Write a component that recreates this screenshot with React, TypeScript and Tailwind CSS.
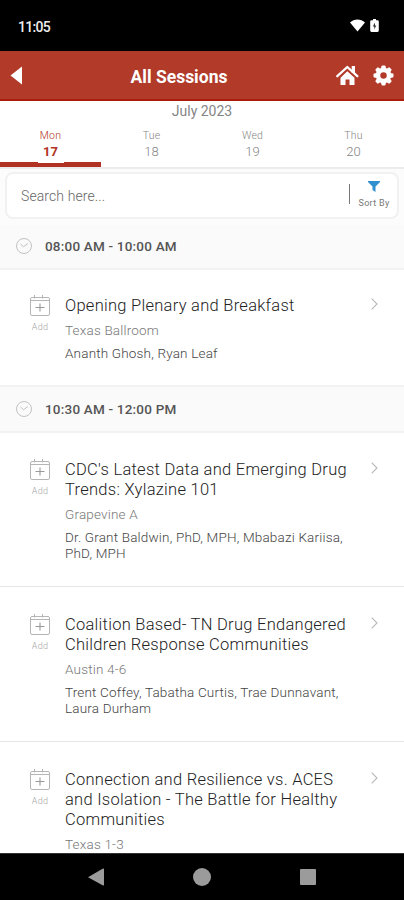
const days = [
  { name: "Mon", date: 17 },
  { name: "Tue", date: 18 },
  { name: "Wed", date: 19 },
  { name: "Thu", date: 20 },
];

const morningSessions = [
  {
    title: ["Opening Plenary and Breakfast"],
    room: "Texas Ballroom",
    speakers: ["Ananth Ghosh, Ryan Leaf"],
  },
];

const middaySessions = [
  {
    title: ["CDC's Latest Data and Emerging Drug", "Trends: Xylazine 101"],
    room: "Grapevine A",
    speakers: ["Dr. Grant Baldwin, PhD, MPH, Mbabazi Kariisa,", "PhD, MPH"],
  },
  {
    title: ["Coalition Based- TN Drug Endangered", "Children Response Communities"],
    room: "Austin 4-6",
    speakers: ["Trent Coffey, Tabatha Curtis, Trae Dunnavant,", "Laura Durham"],
  },
  {
    title: [
      "Connection and Resilience vs. ACES",
      "and Isolation - The Battle for Healthy",
      "Communities",
    ],
    room: "Texas 1-3",
    speakers: [],
  },
];

const gearTeeth = [0, 45, 90, 135, 180, 225, 270, 315];

type Session = { title: string[]; room: string; speakers: string[] };

const StatusBar = () => (
  <div className="h-[51px] shrink-0 bg-black flex items-center justify-between pl-[18px] pr-[25px]">
    <span className="text-[#eee] text-[14px] font-medium leading-5 tracking-[-0.700px] pt-[2px]">
      11:05
    </span>
    <div className="flex items-center gap-[5px]">
      <svg width="15" height="13" viewBox="0 0 15 13" fill="#fff">
        <path d="M0 3.6C4.2-.5 10.800-.5 15 3.600L7.500 12.500Z" />
      </svg>
      <svg width="9" height="13" viewBox="0 0 9 13">
        <path
          d="M3 0h3v1.300h1.500a1.300 1.300 0 0 1 1.300 1.300v9a1.300 1.300 0 0 1-1.300 1.300h-6a1.300 1.300 0 0 1-1.300-1.300v-9a1.300 1.300 0 0 1 1.300-1.300H3z"
          fill="#fff"
        />
        <path d="M5 3.500 2.800 7.600h1.500v3L6.300 6.500H5z" fill="#333" />
      </svg>
    </div>
  </div>
);

const Header = () => (
  <header className="h-[50px] shrink-0 bg-[#b13a29] border-b-2 border-[#a91c0d] flex items-center justify-between pl-[10px] pr-[10px]">
    <svg width="13" height="19" viewBox="0 0 13 19" fill="#fff">
      <path d="M12 0.500v18L0.500 9.500z" />
    </svg>
    <h1 className="text-white text-[17.500px] font-bold pt-[4px] pr-px">All Sessions</h1>
    <div className="flex items-center gap-[14px]">
      <svg width="23" height="21" viewBox="0 0 23 21">
        <path d="M15.700 1h3.300v7h-3.300z" fill="#fff" />
        <path d="M11.300 6.200 18.500 12.800V20h-5v-5.500h-4V20h-5v-7.200z" fill="#fff" />
        <path
          d="M1.300 11.200 11.300 2l10 9.200"
          fill="none"
          stroke="#fff"
          strokeWidth="2.300"
          strokeLinecap="round"
          strokeLinejoin="round"
        />
        <path d="M3.200 12.300 11.300 4.900l8.100 7.400" fill="none" stroke="#b13a29" strokeWidth="0.900" />
      </svg>
      <svg width="21" height="21" viewBox="0 0 21 21">
        {gearTeeth.map((angle) => (
          <path
            key={angle}
            d="M7.700 5 8.500 1.200Q8.700.5 9.400.5h2.200q.7 0 .9.700L13.300 5z"
            fill="#fff"
            transform={`rotate(${angle} 10.500 10.500)`}
          />
        ))}
        <circle cx="10.500" cy="10.500" r="5.500" fill="none" stroke="#fff" strokeWidth="4.500" />
      </svg>
    </div>
  </header>
);

const DayTabs = () => (
  <nav className="shrink-0 h-[68px] border-b-2 border-[#ececec] text-[#858585]">
    <p className="text-center text-[14px] leading-5">July 2023</p>
    <div className="grid grid-cols-4 h-[46px] text-center">
      {days.map((day, index) => (
        <div
          key={day.name}
          className={
            index === 0
              ? "flex flex-col items-center text-[#b13222]"
              : "flex flex-col items-center"
          }
        >
          <span className="text-[10.500px] leading-4 mt-[7px] tracking-[0.200px] font-light">
            {day.name}
          </span>
          <span
            className={
              index === 0
                ? "text-[13px] leading-4 font-bold"
                : "text-[13px] leading-4 font-light"
            }
          >
            {day.date}
          </span>
          {index === 0 && (
            <span className="mt-[2px] h-[5px] w-full bg-[#b13222] flex justify-center">
              <span className="h-px w-[26px] bg-white" />
            </span>
          )}
        </div>
      ))}
    </div>
  </nav>
);

const SearchBar = () => (
  <div className="shrink-0 h-[56px] px-[5px] pt-[3px] bg-[#fcfcfc]">
    <div className="h-[47px] bg-white border-2 border-[#f1f1f1] rounded-lg flex items-center pl-[14px] pr-[7px]">
      <span className="flex-1 text-[14px] text-[#666] font-light tracking-[0.100px] pt-px">
        Search here...
      </span>
      <span className="w-[1.500px] h-[20px] bg-[#777] mr-[8px] mb-[3px]" />
      <div className="w-[32px] flex flex-col items-center mb-[2px]">
        <svg width="12" height="11" viewBox="0 0 12 11" fill="#3190cf">
          <path d="M0 0h12v1L7.500 5.500V11l-3-2V5.500L0 1z" />
        </svg>
        <span className="text-[9px] leading-[12px] mt-[5px] text-[#777] whitespace-nowrap tracking-[0.300px]">
          Sort By
        </span>
      </div>
    </div>
  </div>
);

const TimeBand = ({ label }: { label: string }) => (
  <div className="flex-1 bg-[#fafafa] border-b-2 border-[#f2f2f2] flex items-center pl-[16px] gap-[13px]">
    <svg
      className="mb-[2px]"
      width="16"
      height="18"
      viewBox="0 0 16 18"
      fill="none"
      stroke="#c2c2c2"
      strokeWidth="1"
    >
      <circle cx="8" cy="9" r="7.500" />
      <path d="M4.500 7 7.500 9.700l4.500-3.200" />
    </svg>
    <span className="text-[13.500px] font-medium text-[#555] tracking-[0.200px]">{label}</span>
  </div>
);

const SessionItem = ({ session }: { session: Session }) => (
  <div className="flex items-start">
    <div className="w-[20px] ml-[30px] mr-[15px] -mt-px flex flex-col items-center">
      <svg
        width="20"
        height="21"
        viewBox="0 0 20 21"
        fill="none"
        stroke="#b5b5b5"
        strokeWidth="1"
      >
        <rect x="0.500" y="2.500" width="19" height="18" rx="1.500" />
        <path d="M.5 5.500h19M4.500 0v3.500M12.500 0v3.500" />
        <path d="M10 8.500v8M5.500 12.500h9" stroke="#999" strokeWidth="1.100" />
      </svg>
      <span className="text-[9px] leading-3 mt-[5px] text-[#a5a5a5] tracking-[0.300px] font-light">
        Add
      </span>
    </div>
    <div className="w-[296px] whitespace-nowrap">
      <h3 className="text-[16.500px] leading-5 text-[#222] tracking-[0.270px] font-light">
        {session.title.map((line) => (
          <span key={line} className="block">
            {line}
          </span>
        ))}
      </h3>
      <p className="mt-[6px] text-[13.500px] leading-4 text-[#777] tracking-[0.180px] font-light">
        {session.room}
      </p>
      <p className="mt-[7px] text-[13.500px] leading-4 text-[#444] tracking-[0.180px] font-light">
        {session.speakers.map((line) => (
          <span key={line} className="block">
            {line}
          </span>
        ))}
      </p>
    </div>
    <svg
      className="ml-[10px] mt-[2px]"
      width="7"
      height="12"
      viewBox="0 0 7 12"
      fill="none"
      stroke="#b8b8b8"
      strokeWidth="1.100"
    >
      <path d="M0.700 0.700 6 6 0.700 11.300" />
    </svg>
  </div>
);

const NavigationBar = () => (
  <div className="shrink-0 h-[47px] bg-black border-t border-[#333] flex items-center gap-[89px] pl-[88px]">
    <svg width="16" height="18" viewBox="0 0 16 18" fill="#9b9b9b">
      <path d="M15 0.500a.8.8 0 0 1 1 .8v15.400a.8.8 0 0 1-1 .8L0 9.300z" />
    </svg>
    <span className="size-[18px] rounded-full bg-[#9b9b9b]" />
    <span className="size-[16px] rounded-[1px] bg-[#9b9b9b]" />
  </div>
);

const App = () => {
  return (
    <div className="w-[404px] h-[900px] flex flex-col overflow-hidden bg-white font-['Roboto',sans-serif]">
      <StatusBar />
      <Header />
      <DayTabs />
      <SearchBar />
      <main className="flex-1 min-h-0 overflow-hidden">
        <div className="h-[45px] flex">
          <TimeBand label="08:00 AM - 10:00 AM" />
        </div>
        {morningSessions.map((session) => (
          <div key={session.room} className="h-[117px] pt-[26px] border-b-2 border-[#f2f2f2]">
            <SessionItem session={session} />
          </div>
        ))}
        <div className="h-[46px] pt-px flex bg-[#fafafa]">
          <TimeBand label="10:30 AM - 12:00 PM" />
        </div>
        {middaySessions.map((session, index) => (
          <div
            key={session.room}
            className={
              index === 0
                ? "h-[154px] pt-[27px] border-b border-[#e6e6e6]"
                : "h-[155px] pt-[28px] border-b border-[#e6e6e6]"
            }
          >
            <SessionItem session={session} />
          </div>
        ))}
      </main>
      <NavigationBar />
    </div>
  );
};

export default App;
